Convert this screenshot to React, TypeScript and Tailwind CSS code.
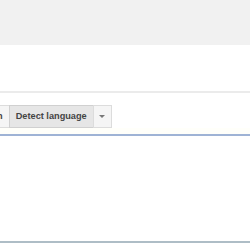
export default function App() {
  return (
    <main className="w-[250px] h-[250px] overflow-hidden bg-white font-['Liberation_Sans',Arial,sans-serif]">
      <div className="h-[45px] bg-[#f1f1f1]" />
      <div className="h-[46px] bg-white" />
      <div className="h-[2px] bg-[#ebebeb]" />

      <div className="h-[12px]" />
      <div className="flex h-[23px] items-stretch">
        <button className="-ml-[39px] flex items-center border border-[#dcdcdc] bg-[#f5f5f5] px-[6px] text-[9.2px] font-bold text-[#444]">
          German
        </button>
        <button className="-ml-px flex items-center border border-[#d0d0d0] bg-[#e6e6e6] px-[6px] text-[9.2px] font-bold text-[#444]">
          Detect language
        </button>
        <button className="-ml-px flex w-[19px] items-center justify-center border border-[#dcdcdc] bg-[#f5f5f5]">
          <span className="block h-0 w-0 border-x-[3px] border-t-[3px] border-x-transparent border-t-[#777]" />
        </button>
      </div>

      <div className="h-[6px] bg-[#fffffa]" />
      <div className="h-[109px] border-t-2 border-b-2 border-t-[#9fb3d5] border-b-[#aebdc6] bg-white" />
    </main>
  );
}
